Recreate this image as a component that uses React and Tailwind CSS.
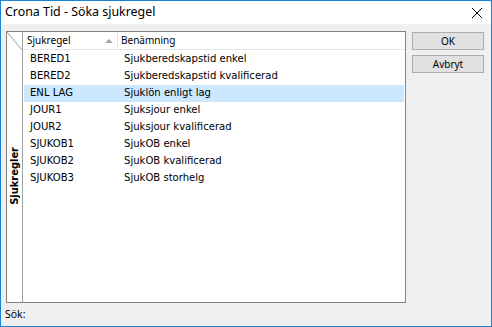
import React from "react";

const rows = [
  ["BERED1", "Sjukberedskapstid enkel"],
  ["BERED2", "Sjukberedskapstid kvalificerad"],
  ["ENL LAG", "Sjuklön enligt lag"],
  ["JOUR1", "Sjuksjour enkel"],
  ["JOUR2", "Sjuksjour kvalificerad"],
  ["SJUKOB1", "SjukOB enkel"],
  ["SJUKOB2", "SjukOB kvalificerad"],
  ["SJUKOB3", "SjukOB storhelg"],
];

const ui = { fontFamily: '"Noto Sans", "Open Sans", sans-serif' };
const tahoma = { fontFamily: '"DejaVu Sans Condensed", "DejaVu Sans", sans-serif' };

export default function App() {
  return (
    <div
      className="w-[492px] h-[327px] border border-[#1883d7] bg-[#f0f0f0] flex flex-col text-[10px] text-black"
      style={ui}
    >
      <div className="h-[23px] bg-white flex items-center justify-between pl-[4px] pr-[6px] shrink-0">
        <span className="text-[12.4px] leading-none">Crona Tid - Söka sjukregel</span>
        <svg width="12" height="12" viewBox="0 0 12 12" className="mr-[2px]">
          <path d="M1 1 L11 11 M11 1 L1 11" stroke="#000" strokeWidth="1" />
        </svg>
      </div>
      <div className="flex-1 flex flex-col pt-[7px] pl-[5px] pr-[5px]">
        <div className="flex">
          <div className="w-[400px] h-[272px] border border-[#828282] bg-white flex">
            <div className="w-[16px] border-r border-[#a0a0a0] flex flex-col shrink-0">
              <svg width="15" height="18" viewBox="0 0 15 18" className="shrink-0">
                <path d="M0 0 L15 18" stroke="#a0a0a0" strokeWidth="1" />
              </svg>
              <div className="flex-1 flex items-center justify-center">
                <span
                  className="[writing-mode:vertical-rl] rotate-180 font-bold text-[11px] leading-none"
                  style={tahoma}
                >
                  Sjukregler
                </span>
              </div>
            </div>
            <div className="flex-1 flex flex-col">
              <div className="h-[18px] flex border-b border-[#e5e5e5] shrink-0">
                <div className="w-[95px] border-r border-[#e5e5e5] flex items-center pl-[4px] pr-[4px] justify-between">
                  <span>Sjukregel</span>
                  <svg width="8" height="5" viewBox="0 0 8 5">
                    <path d="M0 5 L4 1 L8 5 Z" fill="#a6a6a6" />
                  </svg>
                </div>
                <div className="flex items-center pl-[3px]">Benämning</div>
              </div>
              <div className="flex flex-col pt-[1px] text-[11.2px]" style={tahoma}>
                {rows.map(([a, b], i) => (
                  <div
                    key={a}
                    className={
                      "h-[17px] flex items-center ml-[1px] mr-[1px] " +
                      (i === 2 ? "bg-[#cce8ff]" : "")
                    }
                  >
                    <span className="w-[94px] pl-[6px]">{a}</span>
                    <span className="pl-[6px]">{b}</span>
                  </div>
                ))}
              </div>
            </div>
          </div>
          <div className="ml-[6px] flex flex-col gap-[5px] pt-[1px]">
            <button className="w-[72px] h-[18px] bg-[#e1e1e1] border border-[#adadad] flex items-center justify-center leading-none">
              OK
            </button>
            <button className="w-[72px] h-[18px] bg-[#e1e1e1] border border-[#adadad] flex items-center justify-center leading-none">
              Avbryt
            </button>
          </div>
        </div>
        <div className="flex-1 flex items-center -ml-[1px] text-[10.5px]">Sök:</div>
      </div>
    </div>
  );
}
